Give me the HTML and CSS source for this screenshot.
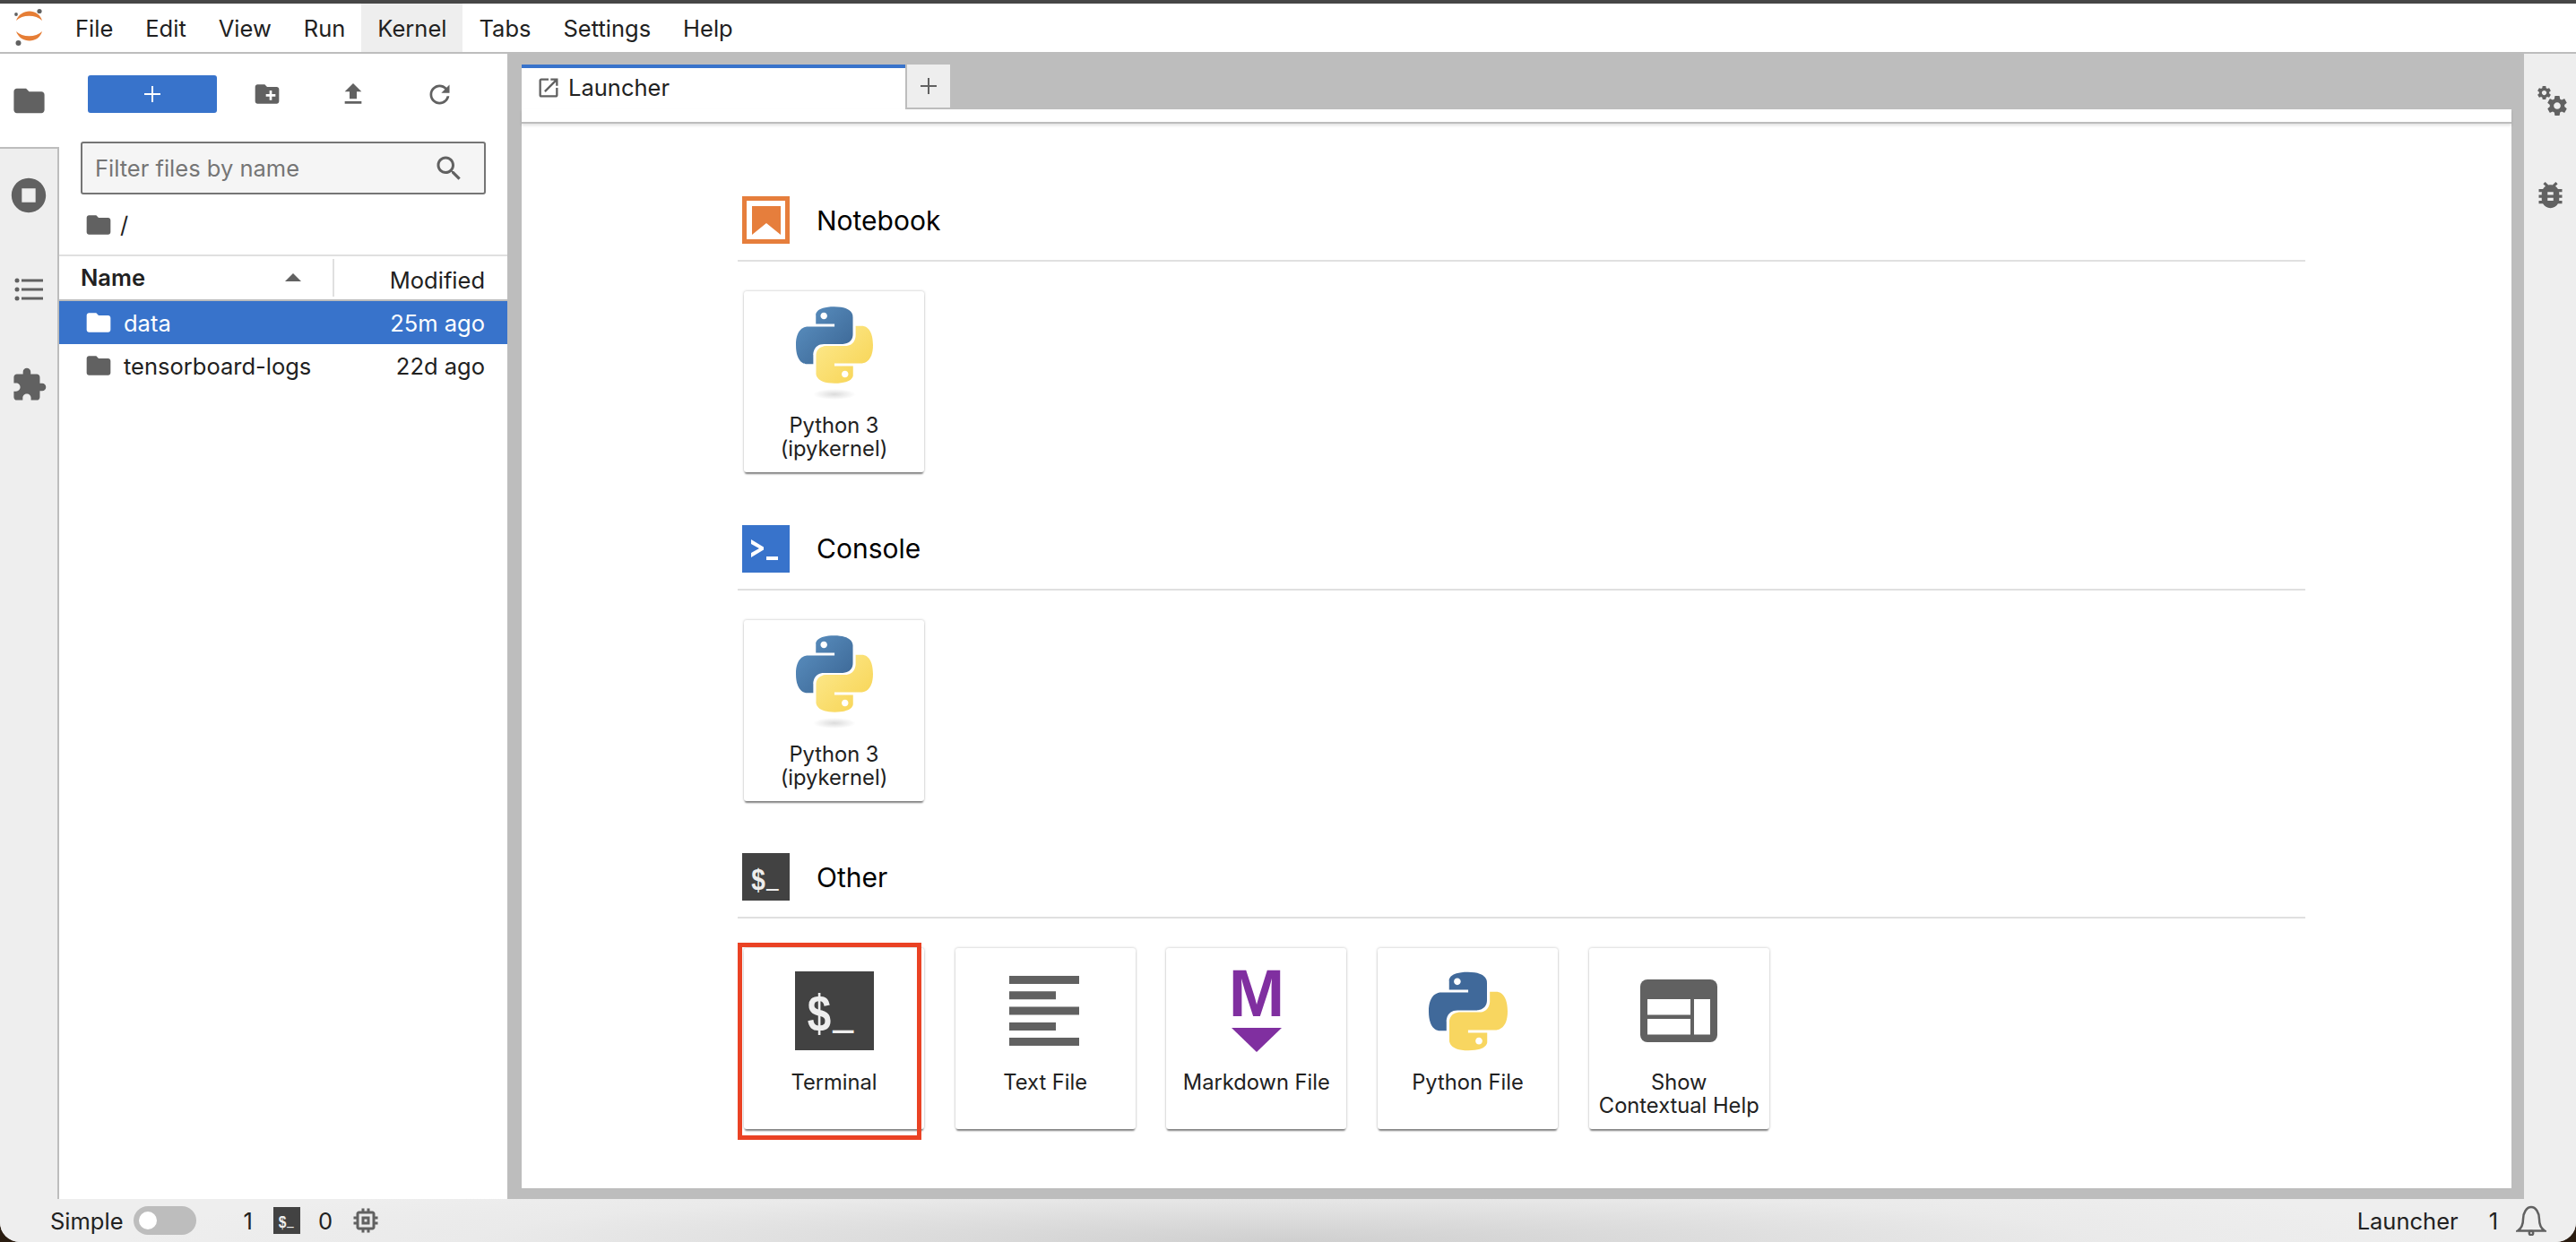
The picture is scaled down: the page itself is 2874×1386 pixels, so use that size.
FILE: index.html
```html
<!DOCTYPE html>
<html lang="en">
<head>
<meta charset="utf-8">
<title>JupyterLab</title>
<link rel="stylesheet" href="styles.css">
</head>
<body>
<svg class="defs" width="0" height="0" aria-hidden="true">
  <defs>
    <linearGradient id="pyBlue" x1="0" y1="0" x2="1" y2="1"><stop offset="0" stop-color="#5d93c4"/><stop offset="1" stop-color="#386290"/></linearGradient>
    <linearGradient id="pyYellow" x1="1" y1="1" x2="0" y2="0"><stop offset="0" stop-color="#f7d24f"/><stop offset="1" stop-color="#fdeb92"/></linearGradient>
    <radialGradient id="pyShadow"><stop offset="0" stop-color="#000" stop-opacity=".14"/><stop offset="1" stop-color="#000" stop-opacity="0"/></radialGradient>
    <symbol id="folder" viewBox="0 0 24 24"><path d="M10 4H4c-1.1 0-1.99.9-1.99 2L2 18c0 1.1.9 2 2 2h16c1.1 0 2-.9 2-2V8c0-1.1-.9-2-2-2h-8l-2-2z"/></symbol>
    <symbol id="gear" viewBox="0 0 24 24"><path d="M19.43 12.98c.04-.32.07-.64.07-.98s-.03-.66-.07-.98l2.11-1.65c.19-.15.24-.42.12-.64l-2-3.46c-.12-.22-.39-.3-.61-.22l-2.49 1c-.52-.4-1.08-.73-1.69-.98l-.38-2.65C14.46 2.18 14.25 2 14 2h-4c-.25 0-.46.18-.49.42l-.38 2.65c-.61.25-1.17.59-1.69.98l-2.49-1c-.23-.09-.49 0-.61.22l-2 3.46c-.13.22-.07.49.12.64l2.11 1.65c-.04.32-.07.65-.07.98s.03.66.07.98l-2.11 1.65c-.19.15-.24.42-.12.64l2 3.46c.12.22.39.3.61.22l2.49-1c.52.4 1.08.73 1.69.98l.38 2.65c.03.24.24.42.49.42h4c.25 0 .46-.18.49-.42l.38-2.65c.61-.25 1.17-.59 1.69-.98l2.49 1c.23.09.49 0 .61-.22l2-3.46c.12-.22.07-.49-.12-.64l-2.11-1.65zM12 15.5c-1.93 0-3.5-1.57-3.5-3.5s1.57-3.5 3.5-3.5 3.5 1.57 3.5 3.5-1.57 3.5-3.5 3.5z"/></symbol>
    <symbol id="pyTop" viewBox="0 0 110.6 110"><path d="M54.9 0C26.8 0 28.6 12.2 28.6 12.2l0 12.6h26.8v3.8H17.9S0 26.6 0 55c0 28.4 15.6 27.4 15.6 27.4h9.3V69.2s-.5-15.6 15.4-15.6h26.5s14.9.2 14.9-14.4V15.1S84 0 54.9 0zM40.1 8.5c2.7 0 4.8 2.2 4.8 4.8 0 2.7-2.2 4.8-4.8 4.8-2.7 0-4.8-2.2-4.8-4.8 0-2.7 2.2-4.8 4.8-4.8z"/></symbol>
    <symbol id="pyBottom" viewBox="0 0 110.6 110"><path d="M55.7 110c28.1 0 26.3-12.2 26.3-12.2l0-12.6H55.2v-3.8h37.4s18 2 18-26.4c0-28.4-15.6-27.4-15.6-27.4h-9.3v13.2s.5 15.6-15.4 15.6H43.8s-14.9-.2-14.9 14.4v24.1S26.6 110 55.7 110zM70.4 101.5c-2.7 0-4.8-2.2-4.8-4.8 0-2.7 2.2-4.8 4.8-4.8 2.7 0 4.8 2.2 4.8 4.8 0 2.7-2.2 4.8-4.8 4.8z"/></symbol>
  </defs>
</svg>
<div class="app">
  <div class="top-strip"></div>
  <header class="menubar">
    <svg class="logo" viewBox="0 0 66 54">
      <path class="logo-arc" d="M18 19C23 5 43 5 47 19 40 12 25 12 18 19Z"/>
      <path class="logo-arc" d="M18 31C23 45 43 45 47 31 40 38 25 38 18 31Z"/>
      <circle class="logo-dot" cx="44" cy="8.500" r="2.600"/>
      <circle class="logo-dot" cx="18" cy="12" r="1.900"/>
      <circle class="logo-dot" cx="20.500" cy="44" r="3"/>
    </svg>
    <div class="menu-item">File</div>
    <div class="menu-item">Edit</div>
    <div class="menu-item">View</div>
    <div class="menu-item">Run</div>
    <div class="menu-item active">Kernel</div>
    <div class="menu-item">Tabs</div>
    <div class="menu-item">Settings</div>
    <div class="menu-item">Help</div>
  </header>
  <main class="workspace">
    <nav class="sidebar left">
      <div class="side-tab current"><svg class="ic s41"><use href="#folder"/></svg></div>
      <div class="side-tab first"><svg class="ic s46" viewBox="0 0 24 24"><path d="M12 2C6.48 2 2 6.48 2 12s4.48 10 10 10 10-4.48 10-10S17.52 2 12 2zm4 14H8V8h8v8z"/></svg></div>
      <div class="side-tab"><svg class="ic list-ic" viewBox="0 0 32 26"><circle cx="3" cy="3" r="2.500"/><circle cx="3" cy="13" r="2.500"/><circle cx="3" cy="23" r="2.500"/><rect x="8" y="1.500" width="24" height="3"/><rect x="8" y="11.500" width="24" height="3"/><rect x="8" y="21.500" width="24" height="3"/></svg></div>
      <div class="side-tab"><svg class="ic s41" viewBox="0 0 24 24"><path d="M20.5 11H19V7c0-1.100-.9-2-2-2h-4V3.500C13 2.120 11.880 1 10.500 1S8 2.120 8 3.500V5H4c-1.100 0-1.990.9-1.990 2v3.800H3.500c1.490 0 2.700 1.210 2.700 2.700s-1.210 2.700-2.700 2.700H2V20c0 1.100.9 2 2 2h3.800v-1.500c0-1.490 1.210-2.700 2.700-2.700 1.490 0 2.700 1.210 2.700 2.700V22H17c1.100 0 2-.9 2-2v-4h1.500c1.380 0 2.500-1.120 2.500-2.500S21.880 11 20.500 11z"/></svg></div>
    </nav>
    <section class="files">
      <div class="file-tools">
        <button class="new-btn"><svg class="plus-ic" viewBox="0 0 20 20"><path d="M9 1h2v8h8v2h-8v8H9v-8H1V9h8z"/></svg></button>
        <div class="tool"><svg class="ic s32" viewBox="0 0 24 24"><path d="M20 6h-8l-2-2H4c-1.110 0-1.990.89-1.990 2L2 18c0 1.110.89 2 2 2h16c1.110 0 2-.89 2-2V8c0-1.110-.89-2-2-2zm-1 8h-3v3h-2v-3h-3v-2h3V9h2v3h3v2z"/></svg></div>
        <div class="tool"><svg class="ic s32" viewBox="0 0 24 24"><path d="M9 16h6v-6h4l-7-7-7 7h4zm-4 2h14v2H5z"/></svg></div>
        <div class="tool"><svg class="ic s33" viewBox="0 0 18 18"><path d="M9 13.500c-2.490 0-4.500-2.010-4.500-4.500S6.510 4.500 9 4.500c1.240 0 2.360.52 3.170 1.330L10 8h5V3l-1.760 1.760C12.150 3.680 10.660 3 9 3 5.690 3 3.010 5.690 3.010 9S5.690 15 9 15c2.970 0 5.430-2.160 5.900-5h-1.520c-.46 2-2.240 3.500-4.380 3.500z"/></svg></div>
      </div>
      <div class="filter">
        <span class="filter-text">Filter files by name</span>
        <svg class="ic s36" viewBox="0 0 24 24"><path d="M15.500 14h-.79l-.28-.27C15.410 12.590 16 11.110 16 9.500 16 5.910 13.090 3 9.500 3S3 5.910 3 9.500 5.910 16 9.500 16c1.610 0 3.090-.59 4.230-1.570l.27.28v.79l5 4.990L20.490 19l-4.990-5zm-6 0C7.010 14 5 11.990 5 9.500S7.010 5 9.500 5 14 7.010 14 9.500 11.990 14 9.500 14z"/></svg>
      </div>
      <div class="crumbs"><svg class="ic s32"><use href="#folder"/></svg><span>/</span></div>
      <div class="list-head">
        <div class="col-name"><span>Name</span><i class="caret"></i></div>
        <i class="col-div"></i>
        <div class="col-mod">Modified</div>
      </div>
      <div class="row selected"><svg class="ic s32"><use href="#folder"/></svg><span class="row-name">data</span><span>25m ago</span></div>
      <div class="row"><svg class="ic s32"><use href="#folder"/></svg><span class="row-name">tensorboard-logs</span><span>22d ago</span></div>
    </section>
    <div class="split"></div>
    <section class="dock">
      <div class="tabbar">
        <div class="tab"><svg class="ic s28" viewBox="0 0 24 24"><path d="M19 19H5V5h7V3H5c-1.110 0-2 .9-2 2v14c0 1.100.89 2 2 2h14c1.100 0 2-.9 2-2v-7h-2v7zM14 3v2h3.590l-9.830 9.830 1.410 1.410L19 6.410V10h2V3h-7z"/></svg><span>Launcher</span></div>
        <div class="add-tab"><svg class="ic plus-small" viewBox="0 0 20 20"><path d="M9 1h2v8h8v2h-8v8H9v-8H1V9h8z"/></svg></div>
      </div>
      <div class="strip"></div>
      <div class="launcher">
        <div class="section">
          <div class="sec-head">
            <svg class="sec-ic" viewBox="0 0 53 53"><rect class="nb-frame" x="2.500" y="2.500" width="48" height="48"/><path class="nb-mark" d="M11 11H43V43L27 30 11 43Z"/></svg>
            <h2>Notebook</h2>
          </div>
          <div class="cards">
            <div class="card">
              <div class="card-ic">
                <svg class="py-kernel" viewBox="0 0 86 106"><use href="#pyTop" width="86" height="86" fill="url(#pyBlue)"/><use href="#pyBottom" width="86" height="86" fill="url(#pyYellow)"/><ellipse cx="43" cy="98" rx="24" ry="6" fill="url(#pyShadow)"/></svg>
              </div>
              <div class="card-label">Python 3<br>(ipykernel)</div>
            </div>
          </div>
        </div>
        <div class="section">
          <div class="sec-head">
            <svg class="sec-ic" viewBox="0 0 53 53"><rect class="cons-bg" width="53" height="53"/><path class="cons-mark" d="M10 16L24 24.500V27.500L10 36V31L19 26 10 21ZM27 35h13v4H27z"/></svg>
            <h2>Console</h2>
          </div>
          <div class="cards">
            <div class="card">
              <div class="card-ic">
                <svg class="py-kernel" viewBox="0 0 86 106"><use href="#pyTop" width="86" height="86" fill="url(#pyBlue)"/><use href="#pyBottom" width="86" height="86" fill="url(#pyYellow)"/><ellipse cx="43" cy="98" rx="24" ry="6" fill="url(#pyShadow)"/></svg>
              </div>
              <div class="card-label">Python 3<br>(ipykernel)</div>
            </div>
          </div>
        </div>
        <div class="section">
          <div class="sec-head">
            <div class="term term-sec"><span class="term-text">$<span class="us">_</span></span></div>
            <h2>Other</h2>
          </div>
          <div class="cards">
            <div class="card">
              <div class="card-ic"><div class="term term-big"><span class="term-text">$<span class="us">_</span></span></div></div>
              <div class="card-label">Terminal</div>
              <div class="callout"></div>
            </div>
            <div class="card">
              <div class="card-ic">
                <svg class="txt-ic" viewBox="0 0 78 78"><rect width="78" height="9"/><rect y="17.250" width="52" height="9"/><rect y="34.500" width="78" height="9"/><rect y="52" width="52" height="9"/><rect y="69" width="78" height="9"/></svg>
              </div>
              <div class="card-label">Text File</div>
            </div>
            <div class="card">
              <div class="card-ic">
                <div class="md-ic"><span class="md-m">M</span><i class="md-arrow"></i></div>
              </div>
              <div class="card-label">Markdown File</div>
            </div>
            <div class="card">
              <div class="card-ic">
                <svg class="py-file" viewBox="0 0 88 89"><use href="#pyTop" width="88" height="89" class="py-flat-blue"/><use href="#pyBottom" width="88" height="89" class="py-flat-yellow"/></svg>
              </div>
              <div class="card-label">Python File</div>
            </div>
            <div class="card">
              <div class="card-ic">
                <svg class="help-ic" viewBox="0 0 86 70"><rect class="help-bg" width="86" height="70" rx="8"/><rect class="help-pane" x="8" y="22" width="48" height="17.500"/><rect class="help-pane" x="8" y="44" width="48" height="17.500"/><rect class="help-pane" x="60" y="22" width="18" height="39.500"/></svg>
              </div>
              <div class="card-label">Show<br>Contextual Help</div>
            </div>
          </div>
        </div>
      </div>
    </section>
    <div class="split right"></div>
    <nav class="sidebar rightbar">
      <div class="right-tab"><svg class="ic gears" viewBox="0 0 33 33"><use href="#gear" x="-1.500" y="-1.500" width="18" height="18"/><use href="#gear" x="8.800" y="8.800" width="26.400" height="26.400"/></svg></div>
      <div class="right-tab"><svg class="ic s39" viewBox="0 0 24 24"><path d="M20 8h-2.810c-.45-.78-1.070-1.450-1.820-1.960L17 4.410 15.590 3l-2.170 2.170C12.960 5.060 12.490 5 12 5c-.49 0-.96.06-1.410.17L8.410 3 7 4.410l1.620 1.630C7.880 6.550 7.260 7.220 6.810 8H4v2h2.090c-.05.33-.09.66-.09 1v1H4v2h2v1c0 .34.04.67.09 1H4v2h2.810c1.040 1.790 2.970 3 5.190 3s4.150-1.210 5.190-3H20v-2h-2.090c.05-.33.09-.66.09-1v-1h2v-2h-2v-1c0-.34-.04-.67-.09-1H20V8zm-6 8h-4v-2h4v2zm0-4h-4v-2h4v2z"/></svg></div>
    </nav>
  </main>
  <footer class="status">
    <span>Simple</span>
    <span class="toggle"><i class="knob"></i></span>
    <span class="st-one">1</span>
    <div class="term term-small"><span class="term-text">$<span class="us">_</span></span></div>
    <span class="st-zero">0</span>
    <svg class="ic s36 st-chip" viewBox="0 0 24 24"><path d="M15 9H9v6h6V9zm-2 4h-2v-2h2v2zm8-2V9h-2V7c0-1.100-.9-2-2-2h-2V3h-2v2h-2V3H9v2H7c-1.100 0-2 .9-2 2v2H3v2h2v2H3v2h2v2c0 1.100.9 2 2 2h2v2h2v-2h2v2h2v-2h2c1.100 0 2-.9 2-2v-2h2v-2h-2v-2h2zm-4 6H7V7h10v10z"/></svg>
    <span class="st-right">Launcher</span>
    <span class="st-count">1</span>
    <svg class="bell" viewBox="0 0 34 34"><path d="M2 28.500c3-2 6-6 6-13C8 8 12 2 17 2s9 6 9 13.500c0 7 3 11 6 13z"/><circle cx="17" cy="31" r="2.200"/></svg>
  </footer>
</div>
</body>
</html>
```
FILE: styles.css
```css
* { box-sizing: border-box; }
html, body { margin: 0; height: 100%; }
body {
  background: #2a1c10;
  font-family: Inter, "Liberation Sans", sans-serif;
  font-size: 25.500px;
  color: #212121;
  overflow: hidden;
}
.defs { position: absolute; }
.app {
  width: 2874px;
  height: 1386px;
  display: flex;
  flex-direction: column;
  border-radius: 0 0 22px 22px;
  overflow: hidden;
  background: #eee;
}
.top-strip { height: 4px; background: #474747; flex: none; }
.menubar {
  height: 56px;
  flex: none;
  display: flex;
  background: #fff;
  border-bottom: 2px solid #bdbdbd;
}
.logo { width: 66px; height: 54px; flex: none; }
.logo-arc { fill: #e67e36; }
.logo-dot { fill: #616161; }
.menu-item { padding: 0 18px; display: flex; align-items: center; height: 54px; }
.menu-item.active { background: #eee; }

.ic { fill: #616161; flex: none; display: block; }
.s28 { width: 28px; height: 28px; }
.s32 { width: 32px; height: 32px; }
.s33 { width: 33px; height: 33px; }
.s36 { width: 36px; height: 36px; }
.s39 { width: 39px; height: 39px; }
.s41 { width: 41px; height: 41px; }
.s46 { width: 46px; height: 46px; }
.list-ic { width: 32px; height: 26px; }
.gears { width: 33px; height: 33px; margin-left: 5px; overflow: visible; }

.workspace { flex: 1; min-height: 0; display: flex; background: #bdbdbd; }
.sidebar { background: #eee; flex: none; display: flex; flex-direction: column; }
.sidebar.left { width: 66px; border-right: 2px solid #bdbdbd; }
.side-tab { height: 106px; display: flex; align-items: center; justify-content: center; }
.side-tab.current { height: 104px; background: #fff; margin-right: -2px; padding-right: 2px; position: relative; }
.side-tab.first { border-top: 2px solid #bdbdbd; }
.rightbar { width: 58px; }
.right-tab { height: 105px; display: flex; align-items: center; justify-content: center; }

.files { width: 500px; flex: none; background: #fff; display: flex; flex-direction: column; }
.file-tools { display: flex; align-items: center; padding: 24px 0 0 32px; }
.new-btn {
  width: 144px;
  height: 42px;
  margin-right: 8px;
  background: #3873cb;
  border: 0;
  border-radius: 3px;
  display: flex;
  align-items: center;
  justify-content: center;
  padding: 0;
}
.plus-ic { width: 20px; height: 20px; fill: #fff; }
.tool { width: 96px; height: 42px; display: flex; align-items: center; justify-content: center; }
.filter {
  margin: 32px 0 0 24px;
  width: 452px;
  height: 59px;
  background: #f5f5f5;
  border: 2px solid #757575;
  border-radius: 3px;
  display: flex;
  align-items: center;
  justify-content: space-between;
  padding: 0 21px 0 14px;
}
.filter-text { color: #757575; }
.crumbs { height: 67px; display: flex; align-items: center; gap: 8px; padding-left: 28px; }
.list-head {
  height: 52px;
  display: flex;
  align-items: center;
  border-top: 2px solid #e0e0e0;
  border-bottom: 2px solid #bdbdbd;
}
.col-name {
  width: 305px;
  display: flex;
  align-items: center;
  justify-content: space-between;
  padding: 0 35px 2px 24px;
  font-weight: 600;
}
.caret { width: 0; height: 0; border: 9px solid transparent; border-top: 0; border-bottom: 9px solid #616161; }
.col-div { width: 2px; height: 42px; background: #e0e0e0; }
.col-mod { flex: 1; text-align: right; padding: 4px 25px 0 0; }
.row { height: 48px; display: flex; align-items: center; padding: 0 25px 0 28px; }
.row-name { margin-left: 12px; flex: 1; }
.row.selected { background: #3873cb; color: #fff; }
.row.selected .ic { fill: #fff; }

.split { width: 16px; flex: none; }
.split.right { width: 14px; }
.dock { flex: 1; min-width: 0; display: flex; flex-direction: column; padding-bottom: 12px; }
.tabbar { height: 62px; flex: none; padding-top: 12px; display: flex; align-items: flex-start; }
.tab {
  width: 428px;
  height: 50px;
  background: #fff;
  border-top: 4px solid #3873cb;
  display: flex;
  align-items: center;
  gap: 8px;
  padding: 0 0 3px 16px;
}
.add-tab {
  margin-left: 2px;
  width: 48px;
  height: 48px;
  background: #eee;
  display: flex;
  align-items: center;
  justify-content: center;
}
.plus-small { width: 20px; height: 20px; }
.strip {
  height: 16px;
  flex: none;
  background: #fff;
  border-bottom: 2px solid #bdbdbd;
  box-shadow: 0 2px 3px rgba(0,0,0,.12);
  position: relative;
}
.launcher { flex: 1; background: #fff; padding: 81px 0 0 241px; }
.section { width: 1749px; margin-bottom: 58.500px; }
.sec-head {
  height: 73px;
  display: flex;
  gap: 30px;
  padding: 0 0 18px 5px;
  border-bottom: 2px solid #e0e0e0;
  align-items: center;
}
.sec-ic { width: 53px; height: 53px; flex: none; }
.sec-head h2 { margin: 0; font-size: 30px; font-weight: 400; color: #000; }
.nb-frame { fill: #fff; stroke: #e67e3c; stroke-width: 5; }
.nb-mark { fill: #e67e3c; }
.cons-bg { fill: #3873cb; }
.cons-mark { fill: #fff; }
.cards { display: flex; gap: 34.700px; padding: 33px 0 0 7px; }
.card {
  width: 201px;
  height: 202px;
  background: #fff;
  border-radius: 3px;
  box-shadow: 0 0 3px rgba(0,0,0,.28), 0 3px 2px -1px rgba(0,0,0,.45);
  position: relative;
  display: flex;
  flex-direction: column;
  align-items: center;
}
.card-ic { height: 134px; margin-top: 3px; display: flex; align-items: center; justify-content: center; flex: none; }
.card-label { font-size: 23.700px; line-height: 26px; text-align: center; white-space: nowrap; }
.py-kernel { width: 86px; height: 106px; display: block; }
.py-file { width: 88px; height: 89px; display: block; }
.py-flat-blue { fill: #40699a; }
.py-flat-yellow { fill: #f8d660; }
.txt-ic { width: 78px; height: 78px; fill: #616161; display: block; margin-right: 2px; }
.help-ic { width: 86px; height: 70px; display: block; }
.help-bg { fill: #616161; }
.help-pane { fill: #fff; }
.term {
  background: #424242;
  color: #eee;
  font-family: "Liberation Sans", sans-serif;
  font-weight: 700;
  line-height: 1;
  display: flex;
  align-items: center;
  justify-content: center;
  flex: none;
}
.term-text { display: inline-block; white-space: nowrap; transform: scaleX(.82); }
.us { font-size: .85em; vertical-align: .17em; margin-left: .06em; font-weight: 400; }
.term-big { width: 88px; height: 88px; font-size: 58px; padding: 6px 8px 0 0; }
.term-sec { width: 53px; height: 53px; font-size: 34px; padding: 4px 3px 0 0; }
.term-small { width: 30px; height: 30px; font-size: 19px; padding: 2px 1px 0 0; }
.md-ic { width: 60px; display: flex; flex-direction: column; align-items: center; }
.md-m {
  font-family: "Liberation Sans", sans-serif;
  font-weight: 700;
  font-size: 75px;
  line-height: 52px;
  height: 52px;
  color: #802fa0;
}
.md-arrow { width: 0; height: 0; margin-top: 13px; border: 28px solid transparent; border-bottom: 0; border-top: 27px solid #802fa0; }
.callout {
  position: absolute;
  left: -7px;
  top: -6px;
  width: 205px;
  height: 220px;
  border: 5px solid #ea4224;
}

.status {
  height: 48px;
  flex: none;
  display: flex;
  align-items: center;
  padding: 0 33px 0 56px;
  background: radial-gradient(ellipse 1300px 80px at 50% 100%, #cfcfcf, #eaeaea 70%, #eee);
}
.toggle { width: 70px; height: 32px; margin-left: 11px; border-radius: 16px; background: #bdbdbd; display: flex; align-items: center; padding-left: 6px; }
.knob { width: 20px; height: 20px; border-radius: 50%; background: #fff; }
.st-one { margin-left: 53px; }
.term-small { margin-left: 23px; }
.st-zero { margin-left: 20px; }
.st-chip { margin-left: 19px; }
.st-right { margin-left: auto; }
.st-count { margin-left: 34px; }
.bell { width: 34px; height: 34px; margin-left: 20px; display: block; fill: none; stroke: #616161; stroke-width: 2.500; }
.bell circle { fill: #eee; }
```
